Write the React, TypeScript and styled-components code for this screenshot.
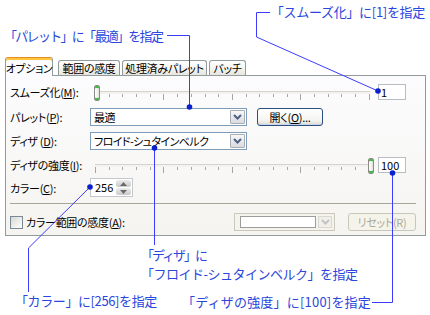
import styled, { createGlobalStyle } from 'styled-components';

const NOTE_BLUE = '#2b46dc';
const LINE_BLUE = '#3c3cff';
const DOT_BLUE = '#0a1fd0';

const GlobalStyle = createGlobalStyle`
  html, body { margin: 0; padding: 0; background: #fff; }
  body {
    font-family: "Noto Sans CJK JP", "Noto Sans", sans-serif;
    color: #000;
  }
`;

type Note = { text: string; left?: number; right?: number; top: number; ls?: number };

const notes: Note[] = [
  { text: '「パレット」に「最適」を指定', left: 4, top: 28, ls: -1.7 },
  { text: '「スムーズ化」に[1]を指定', right: 5, top: 4, ls: -0.3 },
  { text: '「ディザ」に', left: 141, top: 247, ls: -2 },
  { text: '「フロイド-シュタインベルク」を指定', left: 141, top: 266, ls: -0.5 },
  { text: '「カラー」に[256]を指定', left: 15, top: 293, ls: -0.4 },
  { text: '「ディザの強度」に[100]を指定', right: 59, top: 294, ls: 0.2 },
];

const tabs = [
  { label: 'オプション', width: 48, active: true },
  { label: '範囲の感度', width: 62 },
  { label: '処理済みパレット', width: 85 },
  { label: 'バッチ', width: 37 },
];

function Chevron({ disabled }: { disabled?: boolean }) {
  return (
    <svg width="9" height="6" viewBox="0 0 9 6">
      <path
        d="M1 1 L4.5 4.5 L8 1"
        fill="none"
        stroke={disabled ? '#c3c3c3' : '#4d6185'}
        strokeWidth="2"
      />
    </svg>
  );
}

function SpinArrow({ up }: { up?: boolean }) {
  return (
    <svg width="7" height="4" viewBox="0 0 7 4">
      <path d={up ? 'M0 4 L3.5 0 L7 4 Z' : 'M0 0 L3.5 4 L7 0 Z'} fill="#6b6b6b" />
    </svg>
  );
}

function Slider({ value }: { value: number }) {
  const ticks = Array.from({ length: 21 }, (_, i) => i);
  return (
    <SliderBox>
      <Track />
      <Ticks>
        {ticks.map((i) => (
          <Tick key={i} $long={i % 5 === 0} />
        ))}
      </Ticks>
      <Thumb style={{ left: 4 + value * 274 }} />
    </SliderBox>
  );
}

export default function App() {
  return (
    <Page>
      <GlobalStyle />
      <Dialog>
        <TabStrip>
          {tabs.map((t) => (
            <Tab key={t.label} $w={t.width} $active={t.active}>
              {t.label}
            </Tab>
          ))}
        </TabStrip>
        <Panel>
          <Row $h={18}>
            <Label>
              スムーズ化(<Key>M</Key>):
            </Label>
            <Slider value={0} />
            <ValueBox>1</ValueBox>
          </Row>
          <Row $h={18} $mt={7}>
            <Label>
              パレット(<Key>P</Key>):
            </Label>
            <Combo>
              <ComboText>最適</ComboText>
              <DropButton>
                <Chevron />
              </DropButton>
            </Combo>
            <PushButton>
              開く(<Key>O</Key>)...
            </PushButton>
          </Row>
          <Row $h={18} $mt={6}>
            <Label>
              ディザ (<Key>D</Key>):
            </Label>
            <Combo>
              <ComboText>フロイド-シュタインベルク</ComboText>
              <DropButton>
                <Chevron />
              </DropButton>
            </Combo>
          </Row>
          <Row $h={18} $mt={6}>
            <Label>
              ディザの強度(<Key>I</Key>):
            </Label>
            <Slider value={1} />
            <ValueBox>100</ValueBox>
          </Row>
          <Row $h={19} $mt={4}>
            <Label>
              カラー(<Key>C</Key>):
            </Label>
            <Spin>
              <SpinText>256</SpinText>
              <SpinButtons>
                <SpinButton>
                  <SpinArrow up />
                </SpinButton>
                <SpinButton>
                  <SpinArrow />
                </SpinButton>
              </SpinButtons>
            </Spin>
          </Row>
          <Separator />
          <Row $h={18} $mt={9}>
            <CheckBox />
            <CheckLabel>
              カラー範囲の感度(<Key>A</Key>):
            </CheckLabel>
            <DisabledCombo>
              <DisabledField />
              <DisabledDrop>
                <Chevron disabled />
              </DisabledDrop>
            </DisabledCombo>
            <DisabledButton>リセット(R)</DisabledButton>
          </Row>
        </Panel>
      </Dialog>

      {notes.map((n) => (
        <NoteText key={n.text} $left={n.left} $right={n.right} $top={n.top} $ls={n.ls}>
          {n.text}
        </NoteText>
      ))}

      <Callouts width="430" height="315" viewBox="0 0 430 315">
        <g fill="none" stroke={LINE_BLUE} strokeWidth="1">
          <path d="M167 35.5 H189.5 V107" />
          <path d="M270 12.5 H256.5 V37 L378 91" />
          <path d="M154.5 148 V245" />
          <path d="M90 187 L28.5 248 V292" />
          <path d="M392.5 173 V302.5 H372" />
        </g>
        <g fill={DOT_BLUE}>
          <circle cx="189.5" cy="107" r="2.8" />
          <circle cx="378" cy="91" r="2.8" />
          <circle cx="154.5" cy="148" r="2.8" />
          <circle cx="90" cy="187" r="2.8" />
          <circle cx="392.5" cy="173" r="2.8" />
        </g>
      </Callouts>
    </Page>
  );
}

const Page = styled.div`
  position: relative;
  width: 430px;
  height: 315px;
  box-sizing: border-box;
  padding: 57px 0 0 5px;
  overflow: hidden;
  background: #fff;
`;

const Dialog = styled.div`
  width: 421px;
  font-size: 11px;
  letter-spacing: -0.3px;
  font-feature-settings: "palt";
`;

const TabStrip = styled.div`
  display: flex;
  align-items: flex-end;
  height: 18px;
`;

const Tab = styled.div<{ $w: number; $active?: boolean }>`
  position: relative;
  z-index: ${(p) => (p.$active ? 1 : 0)};
  width: ${(p) => p.$w}px;
  box-sizing: border-box;
  height: ${(p) => (p.$active ? 19 : 15)}px;
  margin-bottom: ${(p) => (p.$active ? -1 : 0)}px;
  margin-right: ${(p) => (p.$active ? 5 : 2)}px;
  display: flex;
  align-items: center;
  justify-content: center;
  border: 1px solid #919b9c;
  border-bottom: none;
  border-radius: 3px 3px 0 0;
  white-space: nowrap;
  background: ${(p) =>
    p.$active ? '#fcfcfe' : 'linear-gradient(#ffffff, #f3f3ef 60%, #e6e5de)'};
  ${(p) =>
    p.$active &&
    `border-top: 1px solid #e68b2c; box-shadow: inset 0 2px 0 #ffc73c; padding-top: 2px;`}
`;

const Panel = styled.div`
  box-sizing: border-box;
  height: 161px;
  border: 1px solid #919b9c;
  background: linear-gradient(#fcfcfe, #f5f4f0);
  padding: 7px 9px 0 4px;
  display: flex;
  flex-direction: column;
`;

const Row = styled.div<{ $h: number; $mt?: number }>`
  display: flex;
  align-items: center;
  height: ${(p) => p.$h}px;
  margin-top: ${(p) => p.$mt ?? 0}px;
`;

const Label = styled.div`
  width: 80px;
  flex-shrink: 0;
  white-space: nowrap;
`;

const Key = styled.span`
  text-decoration: underline;
`;

const SliderBox = styled.div`
  position: relative;
  width: 284px;
  height: 18px;
  box-sizing: border-box;
  padding: 0 4px 0 5px;
  display: flex;
  flex-direction: column;
`;

const Track = styled.div`
  margin-top: 8px;
  height: 2px;
  border-top: 1px solid #d4d3cc;
  background: #f3f2ee;
`;

const Ticks = styled.div`
  display: flex;
  justify-content: space-between;
  align-items: flex-start;
`;

const Tick = styled.div<{ $long: boolean }>`
  width: 1px;
  height: ${(p) => (p.$long ? 6 : 3)}px;
  background: #a6a6a2;
`;

const Thumb = styled.div`
  position: absolute;
  top: 2px;
  width: 6px;
  height: 16px;
  box-sizing: border-box;
  border: 1px solid #8a8a86;
  border-radius: 2px;
  background: linear-gradient(90deg, #ffffff, #e4e4dc);
  box-shadow: inset 0 2px 0 #44b944, inset 0 -2px 0 #44b944;
`;

const ValueBox = styled.div`
  margin-left: 4px;
  width: 28px;
  height: 16px;
  box-sizing: border-box;
  border: 1px solid #b9bcc0;
  background: #fff;
  padding-left: 2px;
  line-height: 14px;
  letter-spacing: 0;
  font-feature-settings: normal;
`;

const Combo = styled.div`
  width: 157px;
  height: 18px;
  box-sizing: border-box;
  border: 1px solid #7f9db9;
  background: #fff;
  display: flex;
  align-items: stretch;
  padding: 1px;
`;

const ComboText = styled.div`
  flex: 1;
  padding-left: 2px;
  line-height: 14px;
  letter-spacing: -0.6px;
  white-space: nowrap;
`;

const DropButton = styled.div`
  width: 15px;
  box-sizing: border-box;
  border: 1px solid #a9adb6;
  border-radius: 1px;
  background: linear-gradient(#f7f7f7, #d9dbe0);
  display: flex;
  align-items: center;
  justify-content: center;
`;

const PushButton = styled.div`
  margin-left: 10px;
  width: 66px;
  height: 18px;
  box-sizing: border-box;
  border: 1px solid #2c4f80;
  border-radius: 3px;
  background: linear-gradient(#ffffff, #f4f4f0 70%, #dcdad0);
  box-shadow: inset 0 -1px 0 #c8d4ea;
  display: flex;
  align-items: center;
  justify-content: center;
`;

const Spin = styled.div`
  width: 43px;
  height: 19px;
  box-sizing: border-box;
  border: 1px solid #c4c7cc;
  background: #fff;
  display: flex;
  align-items: stretch;
  padding: 1px;
`;

const SpinText = styled.div`
  flex: 1;
  padding-left: 3px;
  line-height: 15px;
  letter-spacing: 0;
  font-feature-settings: normal;
`;

const SpinButtons = styled.div`
  width: 15px;
  display: flex;
  flex-direction: column;
  gap: 1px;
`;

const SpinButton = styled.div`
  flex: 1;
  border-radius: 2px;
  background: linear-gradient(#ececec, #c9c9c9);
  display: flex;
  align-items: center;
  justify-content: center;
`;

const Separator = styled.div`
  margin-top: 6px;
  height: 1px;
  background: #a7a69e;
`;

const CheckBox = styled.div`
  width: 13px;
  height: 13px;
  box-sizing: border-box;
  border: 1px solid #7b8a99;
  background: linear-gradient(135deg, #d8d8d2, #ffffff);
`;

const CheckLabel = styled.div`
  margin-left: 3px;
  flex: 1;
  white-space: nowrap;
`;

const DisabledCombo = styled.div`
  width: 101px;
  height: 18px;
  box-sizing: border-box;
  border: 1px solid #cac8bb;
  background: #f4f3ee;
  display: flex;
  align-items: stretch;
  gap: 2px;
  padding: 2px 2px 2px 5px;
`;

const DisabledField = styled.div`
  flex: 1;
  border: 1px solid #9c9c98;
  background: #fff;
`;

const DisabledDrop = styled.div`
  width: 12px;
  border: 1px solid #d8d7d0;
  background: #f0efea;
  display: flex;
  align-items: center;
  justify-content: center;
`;

const DisabledButton = styled.div`
  margin-left: 13px;
  width: 68px;
  height: 18px;
  box-sizing: border-box;
  border: 1px solid #c9c7ba;
  border-radius: 3px;
  background: #f5f4ea;
  color: #aca899;
  display: flex;
  align-items: center;
  justify-content: center;
`;

const NoteText = styled.div<{ $left?: number; $right?: number; $top: number; $ls?: number }>`
  position: absolute;
  ${(p) => (p.$left !== undefined ? `left: ${p.$left}px;` : '')}
  ${(p) => (p.$right !== undefined ? `right: ${p.$right}px;` : '')}
  top: ${(p) => p.$top}px;
  font-size: 13px;
  line-height: 16px;
  letter-spacing: ${(p) => p.$ls ?? 0}px;
  color: ${NOTE_BLUE};
  white-space: nowrap;
`;

const Callouts = styled.svg`
  position: absolute;
  left: 0;
  top: 0;
  pointer-events: none;
`;
